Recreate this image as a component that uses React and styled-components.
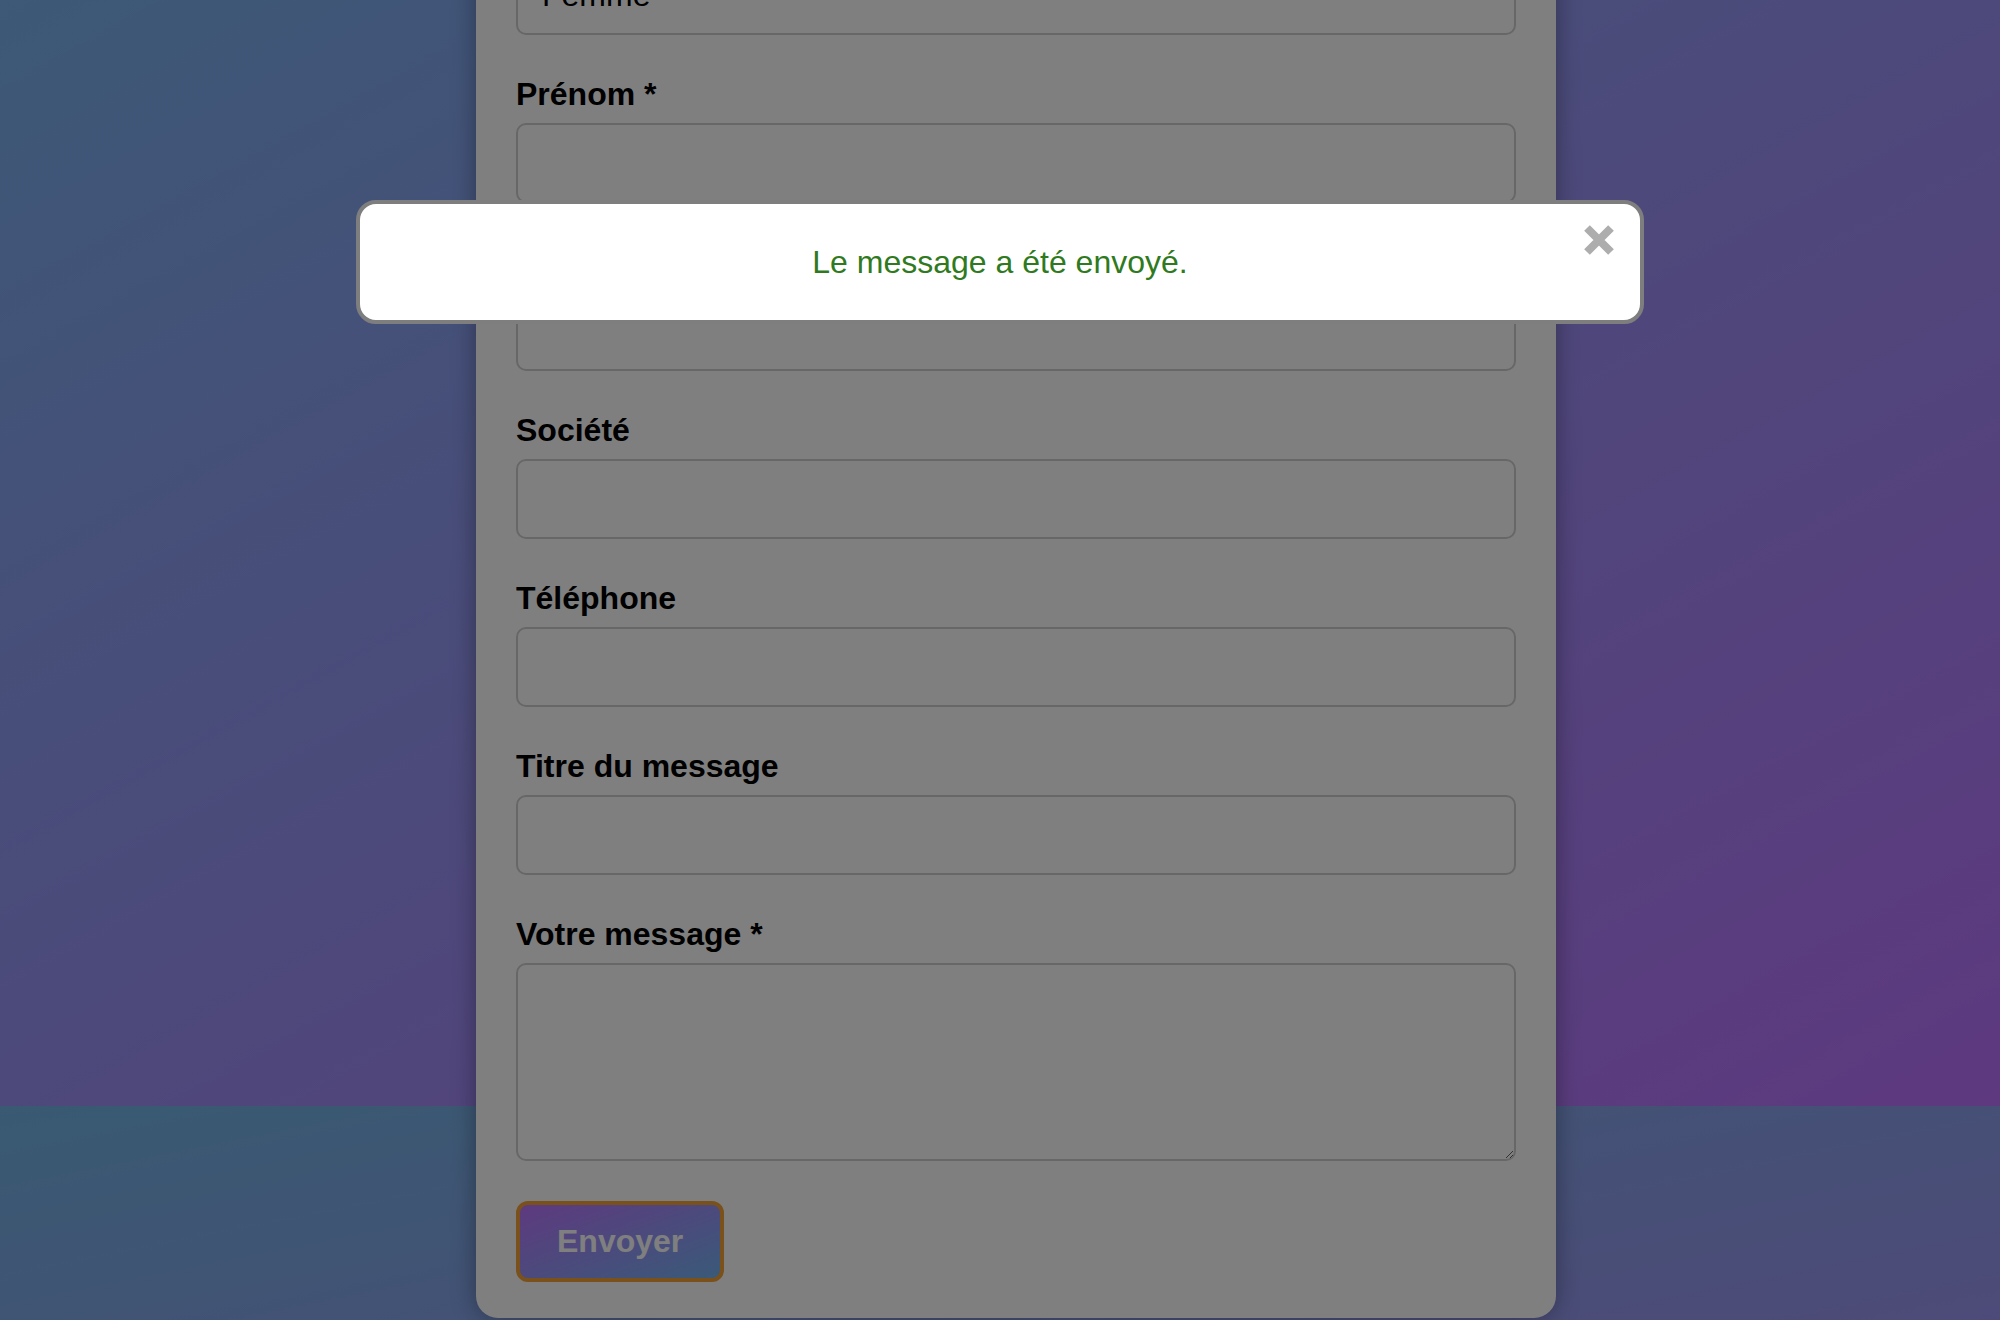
import React from 'react'
import styled, { createGlobalStyle } from 'styled-components'

const GlobalStyle = createGlobalStyle`
  html, body {
    margin: 0;
    padding: 0;
    font-family: "Liberation Sans", Arial, Helvetica, sans-serif;
  }
  * { box-sizing: border-box; }
`

const Page = styled.div`
  position: relative;
  height: 1320px;
  overflow: hidden;
`

const Hero = styled.section`
  height: 1106px;
  display: flex;
  justify-content: center;
  padding-left: 32px;
  background: linear-gradient(to bottom right, #7ab2ee, #bc72ff);
`

const Footer = styled.footer`
  height: 400px;
  background: linear-gradient(to bottom right, #72b4e4, #a88cf6);
`

const Card = styled.form`
  position: relative;
  z-index: 1;
  width: 1080px;
  align-self: flex-start;
  margin-top: -133px;
  padding: 40px 40px 36px;
  background: #fff;
  border-radius: 22px;
  box-shadow: 0 0 24px rgba(0, 0, 0, 0.35);
  display: flex;
  flex-direction: column;
  gap: 40px;
`

const Field = styled.div`
  display: flex;
  flex-direction: column;
`

const Label = styled.label`
  font-size: 32px;
  line-height: 38px;
  font-weight: 700;
  color: #000;
  margin-bottom: 10px;
`

const inputBase = `
  width: 100%;
  border: 2px solid #cfcfcf;
  border-radius: 10px;
  background: #fff;
  font-family: "Liberation Sans", Arial, sans-serif;
  font-size: 32px;
  color: #000;
  outline: none;
`

const Input = styled.input`
  ${inputBase}
  height: 80px;
  padding: 0 28px;
`

const Select = styled.select`
  ${inputBase}
  height: 80px;
  padding: 0 24px;
  appearance: none;
`

const TextArea = styled.textarea`
  ${inputBase}
  height: 198px;
  padding: 20px 28px;
  resize: vertical;
`

const SubmitButton = styled.button`
  align-self: flex-start;
  padding: 18px 37px;
  border: 4px solid #f4a236;
  border-radius: 12px;
  background: linear-gradient(to bottom right, #bc74ff, #74b4f2);
  color: #fff;
  font-family: "Liberation Sans", Arial, sans-serif;
  font-size: 32px;
  line-height: 37px;
  font-weight: 700;
  cursor: pointer;
`

const Overlay = styled.div`
  position: fixed;
  inset: 0;
  z-index: 10;
  background: rgba(0, 0, 0, 0.5);
  display: flex;
  justify-content: center;
  align-items: flex-start;
  padding-top: 200px;
`

const Modal = styled.div`
  position: relative;
  width: 1288px;
  height: 124px;
  background: #fff;
  border: 4px solid #7e7e7e;
  border-radius: 20px;
  display: flex;
  align-items: center;
  justify-content: center;
`

const ModalText = styled.p`
  margin: 0;
  font-size: 32px;
  color: #2f7a20;
`

const CloseButton = styled.button`
  position: absolute;
  top: 21px;
  right: 26px;
  width: 30px;
  height: 30px;
  padding: 0;
  border: none;
  background: none;
  cursor: pointer;
  display: flex;
`

const fields = [
  { label: 'Prénom *', type: 'text' },
  { label: 'E-mail *', type: 'email' },
  { label: 'Société', type: 'text' },
  { label: 'Téléphone', type: 'tel' },
  { label: 'Titre du message', type: 'text' },
]

export default function App() {
  return (
    <React.Fragment>
      <GlobalStyle />
      <Page>
        <Hero>
          <Card onSubmit={(e) => e.preventDefault()}>
            <Field>
              <Label>Civilité *</Label>
              <Select defaultValue="Femme">
                <option>Femme</option>
                <option>Homme</option>
              </Select>
            </Field>
            {fields.map((f) => (
              <Field key={f.label}>
                <Label>{f.label}</Label>
                <Input type={f.type} />
              </Field>
            ))}
            <Field>
              <Label>Votre message *</Label>
              <TextArea />
            </Field>
            <SubmitButton type="submit">Envoyer</SubmitButton>
          </Card>
        </Hero>
        <Footer />
      </Page>

      <Overlay>
        <Modal role="dialog">
          <ModalText>Le message a été envoyé.</ModalText>
          <CloseButton aria-label="Fermer">
            <svg width="30" height="30" viewBox="0 0 30 30">
              <path d="M3 3 L27 27 M27 3 L3 27" stroke="#adadad" strokeWidth="8" />
            </svg>
          </CloseButton>
        </Modal>
      </Overlay>
    </React.Fragment>
  )
}
